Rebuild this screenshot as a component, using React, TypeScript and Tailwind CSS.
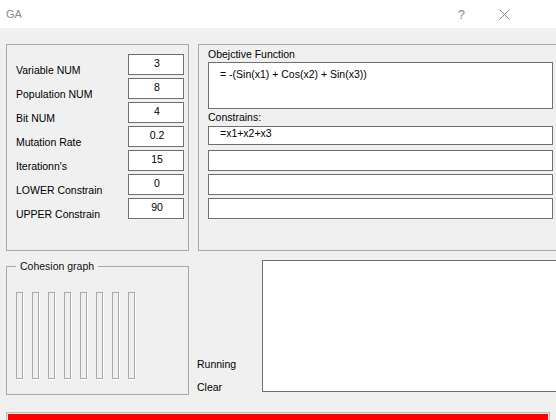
const params = [
  { label: "Variable NUM", value: "3" },
  { label: "Population NUM", value: "8" },
  { label: "Bit NUM", value: "4" },
  { label: "Mutation Rate", value: "0.2" },
  { label: "Iterationn's", value: "15" },
  { label: "LOWER Constrain", value: "0" },
  { label: "UPPER Constrain", value: "90" },
];

function Field({ value }: { value: string }) {
  return (
    <div className="w-[56px] h-[21px] bg-white border border-[#6f6f6f] pt-[2px] pl-[2px] leading-[12px] text-center text-black">
      {value}
    </div>
  );
}

export default function App() {
  return (
    <div className="w-[556px] h-[420px] overflow-hidden bg-[#f0f0f0] font-['Liberation_Sans',Arial,sans-serif] text-[10.5px] text-black">
      {/* title bar */}
      <div className="h-[28px] bg-white flex items-center pl-[6px] pr-[46px]">
        <span className="text-[11px] text-[#8a8a8a] pt-[1px]">GA</span>
        <span className="ml-auto text-[13px] text-[#8a8a8a] font-light pt-[1px]">?</span>
        <svg className="ml-[34px] mt-[1px]" width="11" height="11" viewBox="0 0 11 11">
          <path d="M0.5 0.5 L10.5 10.5 M10.5 0.5 L0.5 10.5" stroke="#7a7a7a" strokeWidth="0.9" fill="none" />
        </svg>
      </div>

      <div className="pl-[6px] pt-[16px]">
        {/* top row */}
        <div className="flex gap-[9px]">
          <div className="w-[183px] h-[207px] shrink-0 border border-[#a9a9a9] pt-[9px] pl-[9px] flex flex-col gap-[3px]">
            {params.map((p) => (
              <div key={p.label} className="flex items-start h-[21px]">
                <div className="w-[112px] mt-[10px] leading-[12px]">{p.label}</div>
                <Field value={p.value} />
              </div>
            ))}
          </div>

          <div className="w-[400px] h-[207px] shrink-0 border border-[#a9a9a9] pt-[3px] pl-[9px]">
            <div className="leading-[12px]">Obejctive Function</div>
            <div className="mt-[2px] w-[345px] h-[47px] bg-white border border-[#6f6f6f] pl-[11px] pt-[5px] leading-[12px]">
              = -(Sin(x1) + Cos(x2) + Sin(x3))
            </div>
            <div className="mt-[2px] leading-[12px]">Constrains:</div>
            <div className="mt-[3px] w-[345px] h-[19px] bg-white border border-[#6f6f6f] pl-[11px] leading-[12px]">
              =x1+x2+x3
            </div>
            <div className="mt-[5px] w-[345px] h-[21px] bg-white border border-[#6f6f6f]" />
            <div className="mt-[3px] w-[345px] h-[21px] bg-white border border-[#6f6f6f]" />
            <div className="mt-[3px] w-[345px] h-[21px] bg-white border border-[#6f6f6f]" />
          </div>
        </div>

        {/* bottom row */}
        <div className="flex mt-[9px]">
          <fieldset className="w-[183px] h-[135px] shrink-0 border border-[#a9a9a9]">
            <legend className="ml-[9px] px-[4px] leading-[12px] text-[#111]">Cohesion graph</legend>
            <div className="flex gap-[9px] pl-[9px] pt-[20px]">
              {Array.from({ length: 8 }).map((_, i) => (
                <div key={i} className="w-[7px] h-[87px] border border-[#a9a9a9] shadow-[1px_1px_0_#ffffff]" />
              ))}
            </div>
          </fieldset>

          <div className="w-[73px] shrink-0 pl-[8px] pt-[98px] flex flex-col gap-[11px] leading-[12px]">
            <span>Running</span>
            <span>Clear</span>
          </div>

          <div className="w-[320px] h-[132px] shrink-0 bg-white border border-[#6f6f6f]" />
        </div>

        {/* progress bar */}
        <div className="mt-[17px] w-[544px] h-[22px] border border-[#bcbcbc] bg-[#e6e6e6] p-[1px]">
          <div className="h-full w-full bg-[#ff0000]" />
        </div>
      </div>
    </div>
  );
}
